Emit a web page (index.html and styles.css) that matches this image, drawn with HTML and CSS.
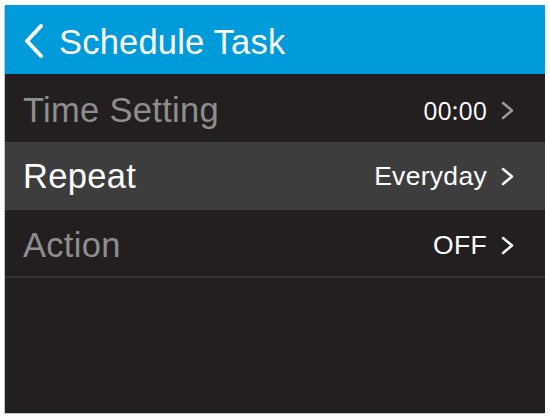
FILE: index.html
```html
<!DOCTYPE html>
<html>
<head>
<meta charset="utf-8">
<link rel="stylesheet" href="styles.css">
</head>
<body>
<div class="panel">
  <div class="header">
    <svg class="back" width="21" height="34" viewBox="0 0 21 34"><path d="M18 2 L4 17 L18 32" fill="none" stroke="#fff" stroke-width="4" stroke-linecap="round" stroke-linejoin="round"/></svg>
    <span class="title">Schedule Task</span>
  </div>
  <div class="row">
    <span class="label">Time Setting</span>
    <span class="value"><span class="time">00:00</span><svg class="chev" width="13" height="19" viewBox="0 0 13 19"><path d="M2 2 L11 9.5 L2 17" fill="none" stroke="#9a9a9a" stroke-width="2.5" stroke-linecap="round" stroke-linejoin="round"/></svg></span>
  </div>
  <div class="row active">
    <span class="label">Repeat</span>
    <span class="value">Everyday<svg class="chev" width="13" height="19" viewBox="0 0 13 19"><path d="M2 2 L11 9.5 L2 17" fill="none" stroke="#fff" stroke-width="2.5" stroke-linecap="round" stroke-linejoin="round"/></svg></span>
  </div>
  <div class="row last">
    <span class="label">Action</span>
    <span class="value">OFF<svg class="chev" width="13" height="19" viewBox="0 0 13 19"><path d="M2 2 L11 9.5 L2 17" fill="none" stroke="#fff" stroke-width="2.5" stroke-linecap="round" stroke-linejoin="round"/></svg></span>
  </div>
</div>
</body>
</html>
```
FILE: styles.css
```css
html, body {
  margin: 0;
  padding: 0;
  background: #ffffff;
}
body {
  padding: 5px;
  font-family: "Liberation Sans", Arial, sans-serif;
}
.panel {
  width: 540px;
  height: 408px;
  background: #231f20;
  box-shadow: -1px 1px 0 #c4c4c4;
  display: flex;
  flex-direction: column;
}
.header {
  height: 69px;
  box-sizing: border-box;
  background: #009bdb;
  display: flex;
  align-items: center;
  padding: 6px 0 0 18px;
  gap: 15px;
}
.back {
  display: block;
  margin-top: -4px;
}
.title {
  color: #ffffff;
  font-size: 34.5px;
  line-height: 1;
  letter-spacing: 0.2px;
}
.row {
  height: 68px;
  box-sizing: border-box;
  display: flex;
  align-items: center;
  justify-content: space-between;
  padding: 4px 31px 0 18px;
}
.row.active {
  background: #3d3d3d;
  padding-top: 0;
}
.row.last {
  height: 68px;
  border-bottom: 2px solid #34302f;
}
.label {
  font-size: 34.5px;
  color: #8e8e8e;
  line-height: 1;
  letter-spacing: 0.3px;
}
.row.active .label {
  color: #ffffff;
}
.value {
  display: flex;
  align-items: center;
  gap: 14px;
  color: #ffffff;
  font-size: 26.5px;
  line-height: 1;
  letter-spacing: 0.3px;
}
.time {
  font-family: "Open Sans", "Liberation Sans", sans-serif;
  font-size: 25px;
  letter-spacing: 0;
}
.chev {
  display: block;
}
```
